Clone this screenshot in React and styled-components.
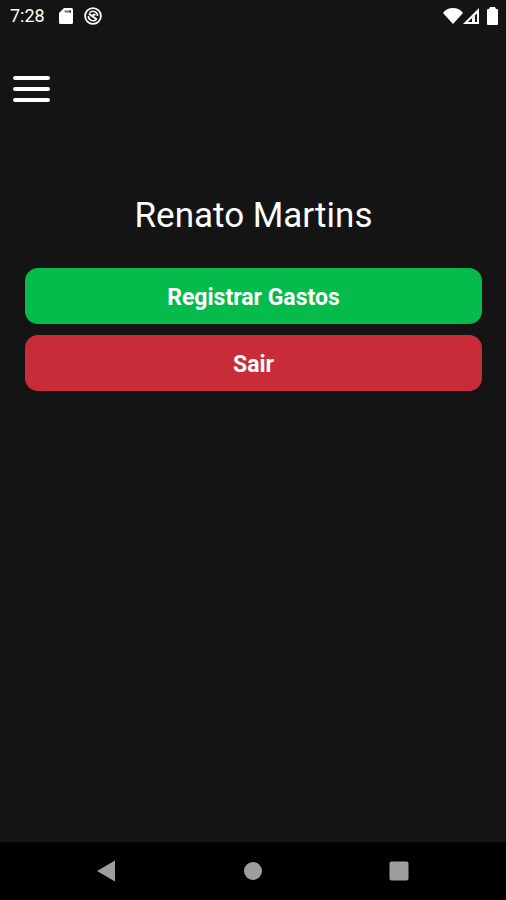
import React from "react";
import styled, {createGlobalStyle} from "styled-components";

const GlobalStyle = createGlobalStyle`
  * {
    box-sizing: border-box;
  }

  body {
    margin: 0;
    background: #141414;
    color: #fff;
    font-family: Roboto, sans-serif;
  }

  button {
    border: none;
    padding: 0;
    background: none;
    color: inherit;
    font-family: inherit;
    cursor: pointer;
  }

  svg {
    display: block;
  }
`;

const Screen = styled.div`
  min-height: 100vh;
  display: flex;
  flex-direction: column;
`;

const StatusBar = styled.header`
  display: flex;
  align-items: center;
  justify-content: space-between;
  height: 31px;
  padding: 0 8px 0 10px;
`;

const StatusGroup = styled.div`
  display: flex;
  align-items: center;
  gap: ${({gap}) => gap || 0}px;
`;

const Clock = styled.time`
  width: 38px;
  font-size: 18px;
  line-height: 20px;
`;

const TopBar = styled.div`
  display: flex;
  padding: 41px 12px;
`;

const MenuButton = styled.button`
  width: 38px;
  height: 34px;
`;

const Main = styled.main`
  flex: 1;
  display: flex;
  flex-direction: column;
  gap: 11px;
  padding: 48px 24px 24px 25px;
`;

const UserName = styled.h1`
  margin: 0 0 20px;
  font-size: 35px;
  line-height: 42px;
  font-weight: 400;
  text-align: center;
`;

const ActionButton = styled.button`
  width: 100%;
  height: 56px;
  padding-top: 3px;
  border-radius: 13px;
  background: ${({color}) => color};
  font-size: 23px;
  line-height: 28px;
  font-weight: 700;
`;

const NavBar = styled.nav`
  display: flex;
  justify-content: center;
  height: 58px;
  background: #000;
`;

const NavButton = styled.button`
  width: 146px;
  display: flex;
  align-items: center;
  justify-content: center;
`;

const SdCardIcon = () => (
  <svg width="14" height="16" viewBox="0 0 14 16">
    <path d="M5 0h7.500q1.500 0 1.500 1.500v13q0 1.500-1.500 1.500h-11Q0 16 0 14.500V5z" fill="#fff" />
    <path d="M5.500 2.500H12v2H5.500z" fill="#777" />
    <path d="M10.500 2.500H12v2h-1.500z" fill="#222" />
  </svg>
);

const SyncIcon = () => (
  <svg width="18" height="18" viewBox="0 0 18 18" fill="none" stroke="#fff">
    <circle cx="9" cy="9" r="7.900" strokeWidth="1.800" />
    <path d="M5.600 5.800a4.600 4.600 0 0 1 8 3.200M12.400 12.200a4.600 4.600 0 0 1-8-3.200" strokeWidth="1.600" />
    <path d="M4.800 6.800L13 12.500M8.500 8l3-.5" strokeWidth="2" />
  </svg>
);

const WifiIcon = () => (
  <svg width="20" height="16" viewBox="0 0 20 16" fill="#fff">
    <path d="M0 5Q3.500 0 10 0T20 5L10 16z" />
  </svg>
);

const SignalIcon = () => (
  <svg width="17" height="16" viewBox="0 0 17 16">
    <path
      fill="#fff"
      fillRule="evenodd"
      d="M0 16L16 0v16zM14 5.500L4.800 14H9V10.500L12 7.500V14h2z"
    />
  </svg>
);

const BatteryIcon = () => (
  <svg width="11" height="18" viewBox="0 0 11 18" fill="#fff">
    <path d="M3 0h5l1 2h1q1 0 1 1v14q0 1-1 1H1q-1 0-1-1V3q0-1 1-1h1z" />
  </svg>
);

const MenuIcon = () => (
  <svg width="38" height="34" viewBox="0 0 38 34" stroke="#fff" strokeWidth="4" strokeLinecap="round">
    <path d="M3 6h33M3 17h33M3 28h33" />
  </svg>
);

const BackIcon = () => (
  <svg width="20" height="22" viewBox="0 0 20 22" fill="#9e9e9e">
    <path d="M0 11L18 .5v21z" />
  </svg>
);

const HomeIcon = () => (
  <svg width="18" height="18" viewBox="0 0 18 18" fill="#9e9e9e">
    <circle cx="9" cy="9" r="9" />
  </svg>
);

const RecentsIcon = () => (
  <svg width="20" height="20" viewBox="0 0 20 20" fill="#9e9e9e">
    <rect x=".5" y=".5" width="19" height="19" rx="2" />
  </svg>
);

const App = () => {
  return (
    <Screen>
      <GlobalStyle />
      <StatusBar>
        <StatusGroup gap={11}>
          <Clock>7:28</Clock>
          <SdCardIcon />
          <SyncIcon />
        </StatusGroup>
        <StatusGroup gap={7}>
          <StatusGroup>
            <WifiIcon />
            <SignalIcon />
          </StatusGroup>
          <BatteryIcon />
        </StatusGroup>
      </StatusBar>
      <TopBar>
        <MenuButton type="button" aria-label="Menu">
          <MenuIcon />
        </MenuButton>
      </TopBar>
      <Main>
        <UserName>Renato Martins</UserName>
        <ActionButton type="button" color="#04bb4b">Registrar Gastos</ActionButton>
        <ActionButton type="button" color="#c72c38">Sair</ActionButton>
      </Main>
      <NavBar>
        <NavButton type="button" aria-label="Voltar">
          <BackIcon />
        </NavButton>
        <NavButton type="button" aria-label="Início">
          <HomeIcon />
        </NavButton>
        <NavButton type="button" aria-label="Recentes">
          <RecentsIcon />
        </NavButton>
      </NavBar>
    </Screen>
  );
};

export default App;
